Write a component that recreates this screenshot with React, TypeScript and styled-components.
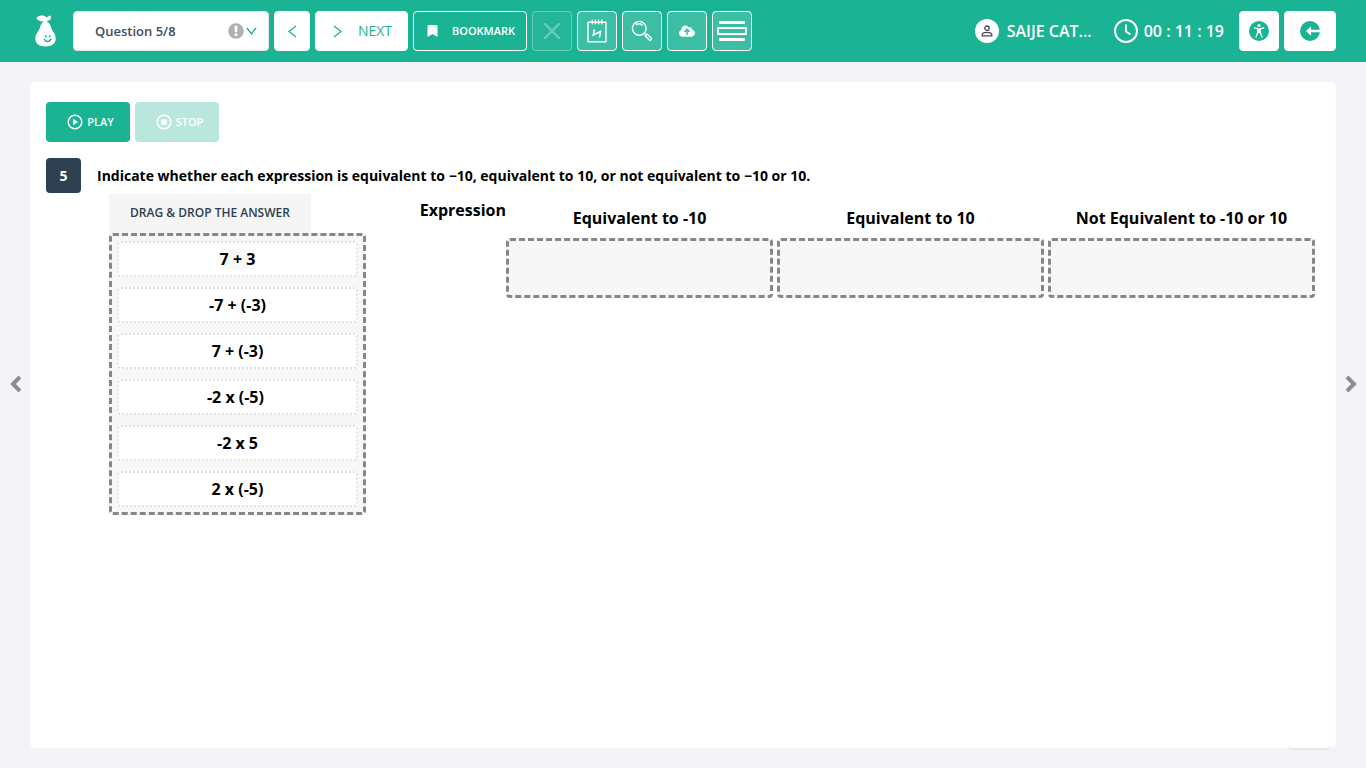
import React from "react";
import styled, { createGlobalStyle } from "styled-components";

const GlobalStyle = createGlobalStyle`
  *, *::before, *::after { box-sizing: border-box; }
  body {
    margin: 0;
    background: #f3f3f8;
    color: #000;
    font-family: "Open Sans", "Noto Sans", sans-serif;
    font-size: 14px;
  }
  button, select { font-family: inherit; margin: 0; padding: 0; }
  svg { display: block; flex: none; }
`;

const Page = styled.div`
  min-height: 100vh;
  display: flex;
  flex-direction: column;
`;

const Header = styled.header`
  background: #1ab394;
  height: 62px;
  padding: 0 30px 0 35px;
  display: flex;
  align-items: center;
  justify-content: space-between;
`;

const Group = styled.div<{ $gap: number }>`
  display: flex;
  align-items: center;
  gap: ${(p) => p.$gap}px;
`;

const Logo = styled.a`
  display: block;
  margin-right: 12px;
`;

const SelectWrap = styled.div`
  position: relative;
  width: 196px;
  height: 40px;
`;

const QuestionSelect = styled.select`
  appearance: none;
  width: 100%;
  height: 40px;
  padding: 0 40px 0 21px;
  border: 1px solid #e5e5e5;
  border-radius: 4px;
  background: #fff;
  color: #434b5d;
  font-size: 13px;
  font-weight: 600;
`;

const SelectMarks = styled.span`
  position: absolute;
  right: 12px;
  top: 12px;
  display: flex;
  align-items: center;
  gap: 2px;
  pointer-events: none;
`;

const HeaderButton = styled.button<{ $width: number; $kind: "solid" | "outline" | "tinted"; $gap?: number }>`
  width: ${(p) => p.$width}px;
  height: 40px;
  display: flex;
  align-items: center;
  justify-content: center;
  gap: ${(p) => p.$gap ?? 0}px;
  padding-left: ${(p) => (p.$gap ? 2 : 0)}px;
  border-radius: 4px;
  border: 1px solid #fff;
  background: ${(p) =>
    p.$kind === "solid" ? "#fff" : p.$kind === "tinted" ? "rgba(255, 255, 255, 0.15)" : "transparent"};
  color: ${(p) => (p.$kind === "solid" ? "#1ab394" : "#fff")};
  &:disabled { opacity: 0.35; }
`;

const NextText = styled.span`
  font-size: 14px;
  line-height: 20px;
`;

const BookmarkText = styled.span`
  font-size: 11px;
  font-weight: 600;
  line-height: 16px;
`;

const HeaderText = styled.span`
  color: #fff;
  font-size: 16px;
  font-weight: 600;
  line-height: 22px;
  white-space: nowrap;
`;

const Avatar = styled.span`
  width: 24px;
  height: 24px;
  border-radius: 50%;
  background: #fff;
  display: flex;
  align-items: center;
  justify-content: center;
`;

const Stage = styled.main`
  flex: 1;
  display: flex;
  padding: 20px 0;
`;

const SideButton = styled.button`
  width: 30px;
  flex: none;
  align-self: center;
  height: 62px;
  margin-bottom: 62px;
  border: 0;
  background: none;
  display: flex;
  align-items: center;
  justify-content: center;
`;

const Card = styled.section`
  position: relative;
  flex: 1;
  min-width: 0;
  background: #fff;
  border-radius: 5px;
  padding: 20px 16px;
`;

const CornerTab = styled.span`
  position: absolute;
  right: 5px;
  bottom: 0;
  width: 42px;
  height: 20px;
  border-radius: 4px;
  background: #fff;
  box-shadow: 0 2px 0 #e8e8ea;
`;

const Playback = styled.div`
  display: flex;
  gap: 5px;
  margin-bottom: 16px;
`;

const PlayButton = styled.button`
  width: 84px;
  height: 40px;
  padding-left: 5px;
  display: flex;
  align-items: center;
  justify-content: center;
  gap: 4px;
  border: 0;
  border-radius: 4px;
  background: #1ab394;
  color: #fff;
  font-size: 11px;
  font-weight: 600;
  line-height: 16px;
  &:disabled { opacity: 0.3; }
`;

const Question = styled.div`
  display: flex;
  align-items: flex-start;
  gap: 16px;
`;

const Badge = styled.span`
  width: 35px;
  height: 35px;
  flex: none;
  border-radius: 4px;
  background: #2f4050;
  color: #fff;
  font-size: 14px;
  font-weight: 700;
  line-height: 35px;
  text-align: center;
`;

const QuestionBody = styled.div`
  flex: 1;
  min-width: 0;
`;

const Prompt = styled.h1`
  margin: 0 0 1px;
  font-size: 14px;
  font-weight: 700;
  line-height: 35px;
`;

const Work = styled.div`
  display: flex;
  align-items: flex-start;
  padding: 0 5px 0 12px;
`;

const Source = styled.div`
  width: 257px;
  flex: none;
`;

const SourceTitle = styled.h2`
  width: 202px;
  height: 39px;
  margin: 0;
  background: #f5f5f5;
  color: #2f4050;
  font-size: 12px;
  font-weight: 600;
  line-height: 38px;
  text-align: center;
`;

const DropZone = styled.ul`
  margin: 0;
  list-style: none;
  border: 3px dashed #878787;
  border-radius: 4px;
  background: #f7f7f7;
  padding: 5px;
  display: flex;
  flex-direction: column;
  gap: 10px;
`;

const Choice = styled.li`
  height: 36px;
  border: 2px dotted #dfdfdf;
  border-radius: 4px;
  background: #fff;
  font-size: 16px;
  font-weight: 700;
  line-height: 32px;
  text-align: center;
  cursor: grab;
`;

const Tint = styled.span`
  background: #f8f8f8;
  line-height: 20px;
  display: inline-block;
`;

const RowTitle = styled.div`
  width: 140px;
  flex: none;
  font-size: 16px;
  font-weight: 700;
  line-height: 32px;
  text-align: right;
`;

const Columns = styled.div`
  flex: 1;
  display: grid;
  grid-template-columns: repeat(3, 1fr);
  gap: 4px;
`;

const ColumnTitle = styled.h3`
  margin: 0;
  padding: 4px 0 0;
  font-size: 16px;
  font-weight: 700;
  line-height: 40px;
  text-align: center;
`;

const Target = styled.div`
  height: 60px;
  border: 3px dashed #878787;
  border-radius: 4px;
  background: #f7f7f7;
`;

const PearLogo = () => (
  <svg width="21" height="32" viewBox="0 0 21 32" fill="#fff">
    <path d="M10.3 6.8c3.4 0 4.7 2 5.5 4.6.8 2.7 1.5 4 3 6.2 1.2 1.900 1.900 3.800 1.900 5.900 0 4.900-3.600 8-10.200 8S.3 28.400.3 23.500c0-2.100.7-4 2-5.900 1.500-2.300 2.200-3.600 3-6.200.8-2.600 2-4.600 5-4.600z" />
    <path d="M9 8c.2-1-.2-1.400-1.200-1.500C5 6.400 3 5 1.200 3.400 2.600 1.200 5 .1 7.600.5c2 .3 3.300 1.300 4.300 2.200 1-1 2-2 3.600-2.100l.6 1.300-.9 3.200c-1.500.2-2.900.7-3.400 1.600L12 8z" />
    <path d="M9.300 24.300c1.300 2.900 5.200 2.900 6.700-.2" fill="none" stroke="#1ab394" strokeWidth="1.5" strokeLinecap="round" />
    <circle cx="10.8" cy="21.3" r="1" fill="#1ab394" />
    <circle cx="14.6" cy="21.2" r="1" fill="#1ab394" />
  </svg>
);

const Angle = ({ dir, w, h }: { dir: "left" | "right" | "down"; w: number; h: number }) => {
  const d = {
    left: `M${w - 1} 1L1 ${h / 2}l${w - 2} ${h / 2 - 1}`,
    right: `M1 1l${w - 2} ${h / 2 - 1}L1 ${h - 1}`,
    down: `M1 1l${w / 2 - 1} ${h - 2}L${w - 1} 1`,
  }[dir];
  return (
    <svg width={w} height={h} viewBox={`0 0 ${w} ${h}`} fill="none" stroke="#1ab394" strokeWidth="1.3">
      <path d={d} />
    </svg>
  );
};

const AlertIcon = () => (
  <svg width="16" height="16" viewBox="0 0 16 16">
    <circle cx="8" cy="8" r="7.8" fill="#b1b1b1" />
    <path d="M6.500 2.700h3L9.100 9.200H6.900z" fill="#fff" />
    <circle cx="8" cy="11.7" r="1.5" fill="#fff" />
  </svg>
);

const BookmarkIcon = () => (
  <svg width="11" height="12" viewBox="0 0 11 12" fill="#fff">
    <path d="M.5 1a1 1 0 0 1 1-1h8a1 1 0 0 1 1 1v11l-5-3-5 3z" />
  </svg>
);

const CrossIcon = () => (
  <svg width="16" height="16" viewBox="0 0 16 16" stroke="#fff" strokeWidth="2.4" strokeLinecap="round">
    <path d="M1 1l14 14M15 1L1 15" />
  </svg>
);

const NotepadIcon = () => (
  <svg width="20" height="24" viewBox="0 0 20 24" fill="none" stroke="#fff" strokeWidth="1.4">
    <path d="M1 3.200h18v19.500H1z" />
    <path d="M5.200.5v5M8.400.5v5M11.600.5v5M14.800.5v5" strokeWidth="1.2" />
    <path d="M7.400 10.400L6.200 16.200l7.400-3.900-1.200 6.400" strokeWidth="1.5" />
  </svg>
);

const MagnifierIcon = () => (
  <svg width="22" height="22" viewBox="0 0 22 22" fill="none" stroke="#fff" strokeWidth="1.4">
    <circle cx="8.3" cy="8.3" r="6.9" />
    <path d="M5 4.900c2-1.700 5-1.400 6.700.6M13.200 13.200l2 1.600" />
    <path d="M14.300 15.900l1.700-1.800 4.200 3.900c1.100 1.200-.6 3-1.800 1.900z" />
  </svg>
);

const CloudIcon = () => (
  <svg width="16" height="12" viewBox="0 0 16 12">
    <path
      d="M3.600 11.700A3.500 3.500 0 0 1 2.300 4.900C2.200 2.300 4 .5 6.300.5c1.600 0 2.900.8 3.600 2 1.700-.8 3.400.3 3.400 2.200 1.700.4 2.700 1.700 2.700 3.400 0 2-1.500 3.600-3.500 3.600z"
      fill="#fff"
    />
    <path d="M8 10V5M5.500 6.900L8 4.400l2.500 2.500" fill="none" stroke="#3dbda3" strokeWidth="1.5" />
  </svg>
);

const LineReaderIcon = () => (
  <svg width="30" height="20" viewBox="0 0 30 20" fill="#fff">
    <rect x="2" y="0" width="26" height="3" rx="1" />
    <rect x="1" y="7" width="28" height="6" fill="none" stroke="#fff" strokeWidth="2" />
    <rect x="2" y="17" width="26" height="3" rx="1" />
  </svg>
);

const PersonIcon = () => (
  <svg width="12" height="12" viewBox="0 0 12 12" fill="none" stroke="#434b5d" strokeWidth="1.3">
    <circle cx="6" cy="3.2" r="2.2" />
    <path d="M1.200 10.900V9.600C1.200 8 3.700 7.300 6 7.300s4.800.7 4.800 2.300v1.300z" />
  </svg>
);

const ClockIcon = () => (
  <svg width="24" height="24" viewBox="0 0 24 24" fill="none" stroke="#fff" strokeWidth="2">
    <circle cx="12" cy="12" r="11" />
    <path d="M12 5.500v7l4.500 3" />
  </svg>
);

const AccessIcon = () => (
  <svg width="20" height="20" viewBox="0 0 20 20">
    <circle cx="10" cy="10" r="10" fill="#1ab394" />
    <circle cx="10" cy="4.5" r="1.6" fill="#fff" />
    <path
      d="M5.200 6.900l3.500.8v3.600L7 16.200M14.800 6.900l-3.500.8v3.600l1.700 4.900"
      fill="none"
      stroke="#fff"
      strokeWidth="1.2"
      strokeLinecap="round"
    />
    <path d="M8.200 7.500h3.600v4.200l-1.800.6-1.800-.6z" fill="#fff" />
  </svg>
);

const ExitIcon = () => (
  <svg width="20" height="20" viewBox="0 0 20 20">
    <circle cx="10" cy="10" r="10" fill="#1ab394" />
    <path d="M6 10L11 5.200v3.600h9v2.400h-9v3.600z" fill="#fff" />
  </svg>
);

const PlaybackIcon = ({ stop }: { stop?: boolean }) => (
  <svg width="16" height="16" viewBox="0 0 16 16">
    <circle cx="8" cy="8" r="6.8" fill="none" stroke="#fff" strokeWidth="1.4" />
    {stop ? <path d="M5.300 5.300h5.400v5.400H5.300z" fill="#fff" /> : <path d="M6.200 4.800L11 8l-4.800 3.200z" fill="#fff" />}
  </svg>
);

const SideChevron = ({ right }: { right?: boolean }) => (
  <svg width="12" height="18" viewBox="0 0 12 18" fill="none" stroke="#8a8d94" strokeWidth="4">
    <path d={right ? "M2 2l7 7-7 7" : "M11 2L4 9l7 7"} />
  </svg>
);

const choices = ["7 + 3", "-7 + (-3)", "7 + (-3)", "-2 x (-5)\u00a0", "-2 x 5", "2 x (-5)"];
const columns = ["Equivalent to -10", "Equivalent to 10", "Not Equivalent to -10 or 10"];

export default function App() {
  return (
    <Page>
      <GlobalStyle />
      <Header>
        <Group $gap={5}>
          <Logo href="#" aria-label="Home">
            <PearLogo />
          </Logo>
          <SelectWrap>
            <QuestionSelect aria-label="Question">
              <option>Question 5/8</option>
            </QuestionSelect>
            <SelectMarks>
              <AlertIcon />
              <Angle dir="down" w={11} h={8} />
            </SelectMarks>
          </SelectWrap>
          <HeaderButton $width={36} $kind="solid" aria-label="Previous">
            <Angle dir="left" w={9} h={13} />
          </HeaderButton>
          <HeaderButton $width={93} $kind="solid" $gap={16}>
            <Angle dir="right" w={9} h={13} />
            <NextText>NEXT</NextText>
          </HeaderButton>
          <HeaderButton $width={114} $kind="outline" $gap={14}>
            <BookmarkIcon />
            <BookmarkText>BOOKMARK</BookmarkText>
          </HeaderButton>
          <HeaderButton $width={40} $kind="tinted" disabled aria-label="Cross out">
            <CrossIcon />
          </HeaderButton>
          <HeaderButton $width={40} $kind="tinted" aria-label="Scratchpad">
            <NotepadIcon />
          </HeaderButton>
          <HeaderButton $width={40} $kind="tinted" aria-label="Magnify">
            <MagnifierIcon />
          </HeaderButton>
          <HeaderButton $width={40} $kind="tinted" aria-label="Upload">
            <CloudIcon />
          </HeaderButton>
          <HeaderButton $width={40} $kind="tinted" aria-label="Line reader">
            <LineReaderIcon />
          </HeaderButton>
        </Group>
        <Group $gap={15}>
          <Group $gap={22}>
            <Group $gap={8}>
              <Avatar>
                <PersonIcon />
              </Avatar>
              <HeaderText>SAIJE CAT...</HeaderText>
            </Group>
            <Group $gap={6}>
              <ClockIcon />
              <HeaderText>00 : 11 : 19</HeaderText>
            </Group>
          </Group>
          <Group $gap={5}>
            <HeaderButton $width={40} $kind="solid" aria-label="Accessibility">
              <AccessIcon />
            </HeaderButton>
            <HeaderButton $width={52} $kind="solid" aria-label="Exit">
              <ExitIcon />
            </HeaderButton>
          </Group>
        </Group>
      </Header>
      <Stage>
        <SideButton aria-label="Previous question">
          <SideChevron />
        </SideButton>
        <Card>
          <Playback>
            <PlayButton>
              <PlaybackIcon />
              PLAY
            </PlayButton>
            <PlayButton disabled>
              <PlaybackIcon stop />
              STOP
            </PlayButton>
          </Playback>
          <Question>
            <Badge>5</Badge>
            <QuestionBody>
              <Prompt>
                Indicate whether each expression is equivalent to −10, equivalent to 10, or not equivalent to −10 or 10.
              </Prompt>
              <Work>
                <Source>
                  <SourceTitle>DRAG &amp; DROP THE ANSWER</SourceTitle>
                  <DropZone>
                    {choices.map((c, i) => (
                      <Choice key={c} draggable>
                        {i === 0 ? <Tint>{c}</Tint> : c}
                      </Choice>
                    ))}
                  </DropZone>
                </Source>
                <RowTitle>Expression</RowTitle>
                <Columns>
                  {columns.map((c) => (
                    <div key={c}>
                      <ColumnTitle>{c}</ColumnTitle>
                      <Target aria-label={c} />
                    </div>
                  ))}
                </Columns>
              </Work>
            </QuestionBody>
          </Question>
          <CornerTab />
        </Card>
        <SideButton aria-label="Next question">
          <SideChevron right />
        </SideButton>
      </Stage>
    </Page>
  );
}
